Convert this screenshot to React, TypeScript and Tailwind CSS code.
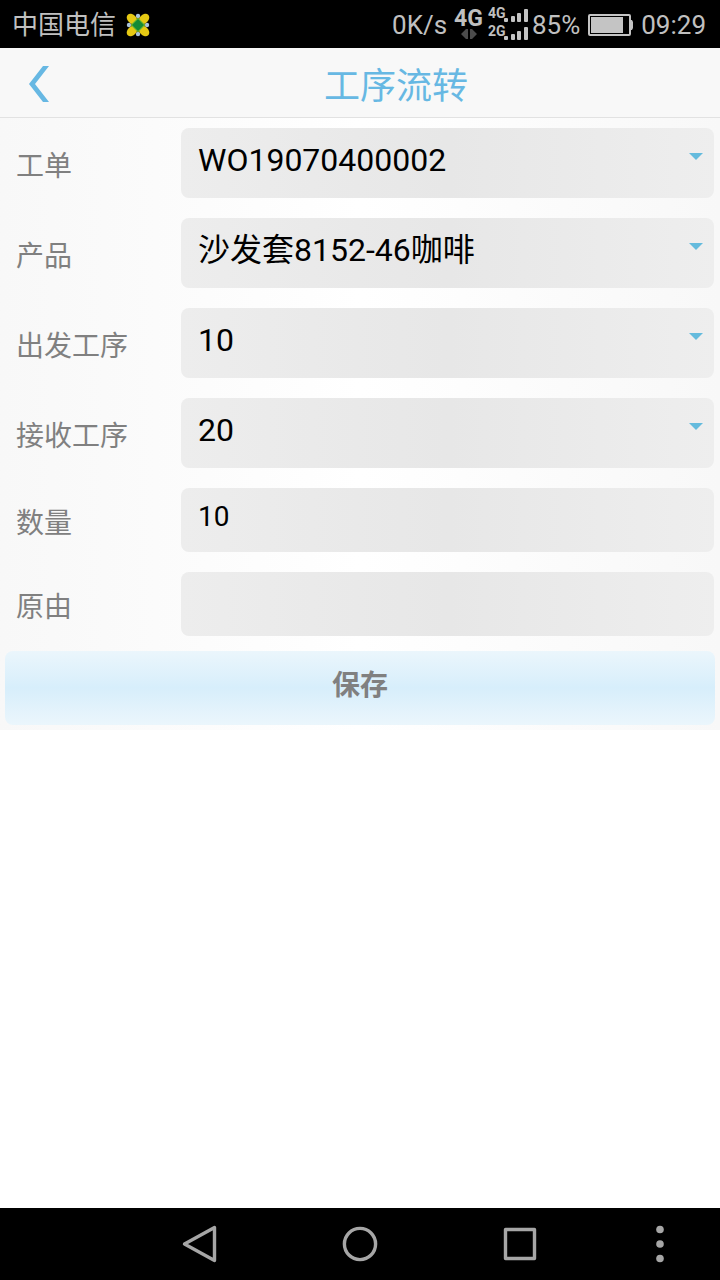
import { ReactNode } from "react";

interface FieldProps {
  id: string;
  label: string;
  children: ReactNode;
}

function Field({ id, label, children }: FieldProps) {
  return (
    <div className="flex items-center py-[10px] pr-[6px] pl-4">
      <label htmlFor={id} className="w-[165px] shrink-0 pt-2 text-[28px] leading-8 text-[#808080]">
        {label}
      </label>
      <div className="relative flex min-w-0 flex-1">{children}</div>
    </div>
  );
}

interface SelectFieldProps {
  id: string;
  label: string;
  value: string;
}

function SelectField({ id, label, value }: SelectFieldProps) {
  return (
    <Field id={id} label={label}>
      <select
        id={id}
        defaultValue={value}
        className="h-[70px] w-full appearance-none rounded-lg bg-linear-to-r from-[#ededed] via-[#e7e7e7] to-[#eeeeee] pr-10 pb-[6px] pl-[17px] text-[32px] text-black outline-none"
      >
        <option value={value}>{value}</option>
      </select>
      <svg
        className="pointer-events-none absolute top-[25px] right-[11px] h-[7px] w-[14px]"
        viewBox="0 0 14 7"
        fill="#64bbdd"
      >
        <path d="M0 0h14L7 7z" />
      </svg>
    </Field>
  );
}

interface InputFieldProps {
  id: string;
  label: string;
  value?: string;
}

function InputField({ id, label, value = "" }: InputFieldProps) {
  return (
    <Field id={id} label={label}>
      <input
        id={id}
        type="text"
        defaultValue={value}
        className="h-16 w-full rounded-lg bg-linear-to-r from-[#ededed] via-[#e7e7e7] to-[#eeeeee] px-[17px] pb-2 text-[28px] text-black outline-none"
      />
    </Field>
  );
}

/** 信号格 */
function SignalBars() {
  return (
    <svg className="h-[13px] w-6" viewBox="0 0 24 13" fill="#c4c4c4">
      <rect x="0" y="9" width="4" height="4" rx="1" />
      <rect x="7" y="7" width="4" height="6" rx="1" />
      <rect x="13" y="4" width="4" height="9" rx="1" />
      <rect x="20" y="0" width="4" height="13" rx="1" />
    </svg>
  );
}

function StatusBar() {
  return (
    <div className="flex h-12 items-center justify-between bg-black pr-[14px] pl-3 text-[26px] leading-8 text-[#c0c0c0]">
      <div className="flex items-center gap-[10px] pt-[2px]">
        <span>中国电信</span>
        <svg className="h-6 w-6" viewBox="0 0 24 24">
          <g fill="#a9c4dc">
            <circle cx="12" cy="3" r="2.2" />
            <circle cx="12" cy="21" r="2.2" />
            <circle cx="3" cy="12" r="2.2" />
            <circle cx="21" cy="12" r="2.2" />
          </g>
          <g fill="#e6c913">
            <ellipse cx="6" cy="6" rx="6" ry="4.4" transform="rotate(45 6 6)" />
            <ellipse cx="18" cy="6" rx="6" ry="4.4" transform="rotate(-45 18 6)" />
            <ellipse cx="6" cy="18" rx="6" ry="4.4" transform="rotate(-45 6 18)" />
            <ellipse cx="18" cy="18" rx="6" ry="4.4" transform="rotate(45 18 18)" />
          </g>
          <path d="M12 4.500l7.500 7.500-7.500 7.500L4.500 12z" fill="#7dbb2c" />
          <path d="M12 6l6 6-6 6-6-6z" fill="#158a35" />
        </svg>
      </div>

      <div className="flex items-center pt-[2px]">
        <span>0K/s</span>
        <div className="ml-[7px] flex flex-col items-center pb-[2px]">
          <span className="text-[23px] leading-5 font-bold">4G</span>
          <svg className="h-[10px] w-4" viewBox="0 0 16 10" fill="#4c4c4c">
            <path d="M0 5l5-5h2v10H5zM16 5l-5-5H9v10h2z" />
          </svg>
        </div>
        <div className="ml-[5px] flex flex-col gap-[2px] pb-1 text-[14px] leading-[14px] font-bold">
          <div className="flex h-4 items-start">
            <span className="w-4">4G</span>
            <span className="self-end">
              <SignalBars />
            </span>
          </div>
          <div className="flex h-4 items-start">
            <span className="w-4">2G</span>
            <span className="self-end">
              <SignalBars />
            </span>
          </div>
        </div>
        <span className="ml-1">85%</span>
        <svg className="ml-2 h-[22px] w-[45px]" viewBox="0 0 45 22">
          <rect x="1" y="1" width="41" height="20" rx="1" fill="none" stroke="#c4c4c4" strokeWidth="2" />
          <rect x="3" y="3" width="32" height="16" fill="#c4c4c4" />
          <path d="M42 6h2l1 2v6l-1 2h-2z" fill="#c4c4c4" />
        </svg>
        <span className="ml-2">09:29</span>
      </div>
    </div>
  );
}

function Header() {
  return (
    <header className="relative flex h-[70px] items-center justify-center border-b border-[#e2e2e2] bg-[#f8f8f8] pt-2 pl-[72px]">
      <button type="button" aria-label="返回" className="absolute top-[18px] left-7">
        <svg className="h-9 w-[22px]" viewBox="0 0 22 36" fill="#67b8e3">
          <path d="M15 0h6L7 18l14 18h-6L1 18z" />
        </svg>
      </button>
      <h1 className="text-[36px] leading-[48px] text-[#67b8e3]">工序流转</h1>
    </header>
  );
}

function NavBar() {
  return (
    <nav className="grid h-[72px] grid-cols-[3fr_4fr_4fr_4fr_3fr] bg-black">
      <button type="button" aria-label="后退" className="col-start-2 flex items-center justify-center">
        <svg className="h-10 w-10" viewBox="0 0 40 40" fill="none" stroke="#a6a6a6" strokeWidth="3.4" strokeLinejoin="round">
          <path d="M4.500 20L34.500 3.500v33z" />
        </svg>
      </button>
      <button type="button" aria-label="主屏幕" className="flex items-center justify-center">
        <svg className="h-10 w-10" viewBox="0 0 40 40" fill="none" stroke="#a6a6a6" strokeWidth="3.4">
          <circle cx="20" cy="20" r="15.6" />
        </svg>
      </button>
      <button type="button" aria-label="最近任务" className="flex items-center justify-center">
        <svg className="h-10 w-10" viewBox="0 0 40 40" fill="none" stroke="#a6a6a6" strokeWidth="3.4" strokeLinejoin="round">
          <rect x="5.5" y="5.5" width="29" height="29" />
        </svg>
      </button>
      <button type="button" aria-label="菜单" className="flex items-center justify-center">
        <svg className="h-10 w-10" viewBox="0 0 40 40" fill="#a6a6a6">
          <circle cx="20" cy="5.5" r="3.8" />
          <circle cx="20" cy="20" r="3.8" />
          <circle cx="20" cy="34.5" r="3.8" />
        </svg>
      </button>
    </nav>
  );
}

export default function App() {
  return (
    <div className="flex min-h-screen flex-col bg-white font-[Roboto,'Noto_Sans_CJK_SC',sans-serif]">
      <StatusBar />
      <Header />
      <main className="flex-1">
        <form className="bg-linear-to-r from-[#f8f8f8] via-white to-[#f8f8f8] pb-[5px]">
          <SelectField id="order" label="工单" value="WO19070400002" />
          <SelectField id="product" label="产品" value="沙发套8152-46咖啡" />
          <SelectField id="from" label="出发工序" value="10" />
          <SelectField id="to" label="接收工序" value="20" />
          <InputField id="quantity" label="数量" value="10" />
          <InputField id="reason" label="原由" />
          <div className="px-[5px] pt-[5px]">
            <button
              type="button"
              className="h-[74px] w-full rounded-lg bg-linear-to-b from-[#ebf6fc] via-[#d7eefb] to-[#ebf6fc] pb-1 text-[28px] font-bold text-[#808080]"
            >
              保存
            </button>
          </div>
        </form>
      </main>
      <NavBar />
    </div>
  );
}
